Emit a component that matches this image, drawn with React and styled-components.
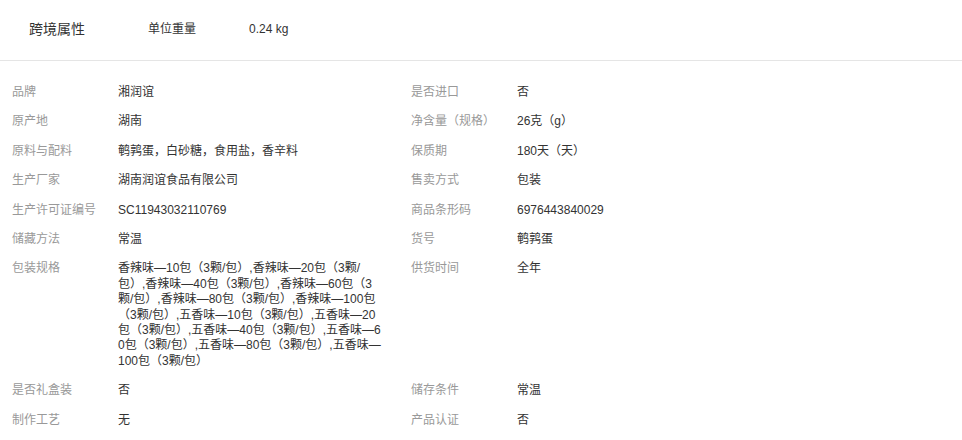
import styled, { createGlobalStyle } from 'styled-components';

const GlobalStyle = createGlobalStyle`
    body {
        margin: 0;
        background: #fff;
        font-family: "Liberation Sans", "Noto Sans CJK SC", sans-serif;
    }
`

const Page = styled.div`
    width: 962px;
`

const CrossBorder = styled.div`
    display: flex;
    align-items: center;
    padding: 19px 0 21px 29px;
    line-height: 20px;
    border-bottom: 1px solid #e5e5e5;
    color: #333;
`

const SectionTitle = styled.div`
    width: 119px;
    font-size: 14px;
`

const TopKey = styled.div`
    width: 101px;
    font-size: 12px;
`

const TopValue = styled.div`
    font-size: 12px;
`

const AttrGrid = styled.div`
    display: grid;
    grid-template-columns: 106px 293px 106px 1fr;
    padding: 17px 0 0 12px;
    font-size: 12px;
    line-height: 15.4px;
`

const Label = styled.div`
    padding: 7px 0;
    color: #999;
`

const Value = styled.div`
    padding: 7px 29px 7px 0;
    color: #333;
    word-break: break-all;
`

const rows = [
    [['品牌', '湘润谊'], ['是否进口', '否']],
    [['原产地', '湖南'], ['净含量（规格）', '26克（g）']],
    [['原料与配料', '鹌鹑蛋，白砂糖，食用盐，香辛料'], ['保质期', '180天（天）']],
    [['生产厂家', '湖南润谊食品有限公司'], ['售卖方式', '包装']],
    [['生产许可证编号', 'SC11943032110769'], ['商品条形码', '6976443840029']],
    [['储藏方法', '常温'], ['货号', '鹌鹑蛋']],
    [
        ['包装规格', '香辣味—10包（3颗/包）,香辣味—20包（3颗/包）,香辣味—40包（3颗/包）,香辣味—60包（3颗/包）,香辣味—80包（3颗/包）,香辣味—100包（3颗/包）,五香味—10包（3颗/包）,五香味—20包（3颗/包）,五香味—40包（3颗/包）,五香味—60包（3颗/包）,五香味—80包（3颗/包）,五香味—100包（3颗/包）'],
        ['供货时间', '全年'],
    ],
    [['是否礼盒装', '否'], ['储存条件', '常温']],
    [['制作工艺', '无'], ['产品认证', '否']],
]

export default function App() {
    return (
        <Page>
            <GlobalStyle />
            <CrossBorder>
                <SectionTitle>跨境属性</SectionTitle>
                <TopKey>单位重量</TopKey>
                <TopValue>0.24 kg</TopValue>
            </CrossBorder>
            <AttrGrid>
                {rows.map((pairs, i) =>
                    pairs.map(([k, v]) => [
                        <Label key={`${i}-${k}-l`}>{k}</Label>,
                        <Value key={`${i}-${k}-v`}>{v}</Value>,
                    ])
                )}
            </AttrGrid>
        </Page>
    )
}
